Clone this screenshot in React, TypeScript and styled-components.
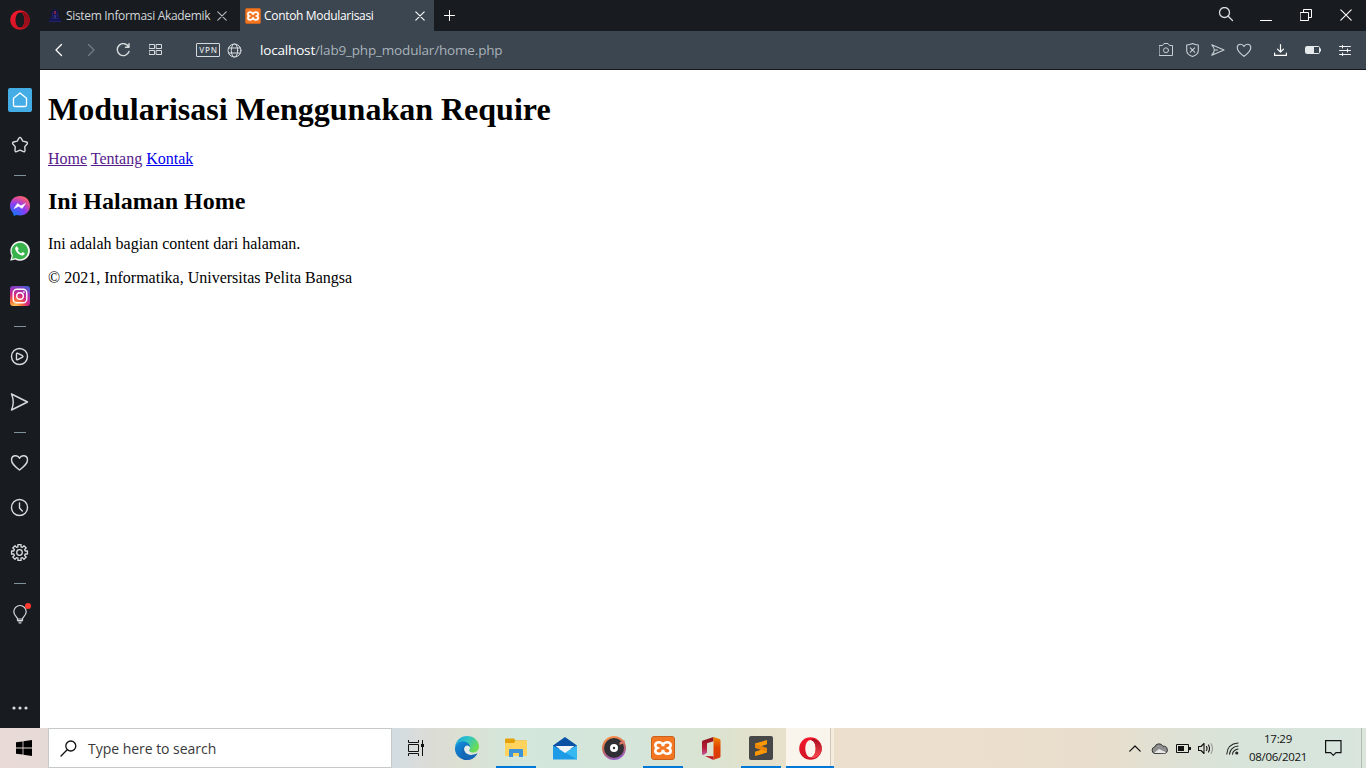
import React from "react";
import styled, { createGlobalStyle } from "styled-components";

const GlobalStyle = createGlobalStyle`
  * { box-sizing: border-box; }
  html, body { margin: 0; padding: 0; overflow: hidden; background: #fff; }
  svg { display: block; flex: none; }
`;

const ui = `"Segoe UI", "Open Sans", "Noto Sans", sans-serif`;

const Desktop = styled.div`
  width: 1366px;
  height: 768px;
  display: flex;
  flex-direction: column;
  font-family: ${ui};
`;

const Browser = styled.div`
  height: 728px;
  display: flex;
`;

/* ---------- sidebar ---------- */

const Sidebar = styled.aside`
  width: 40px;
  height: 728px;
  background: #181c20;
  display: flex;
  flex-direction: column;
  align-items: center;
`;

const SideLogo = styled.div`
  height: 77.5px;
  padding-top: 10px;
`;

const SideItem = styled.div`
  position: relative;
  height: 45px;
  width: 40px;
  display: flex;
  align-items: center;
  justify-content: center;
`;

const HomeTile = styled.div`
  width: 24px;
  height: 24px;
  border-radius: 2px;
  background: #44ade6;
  display: flex;
  align-items: center;
  justify-content: center;
`;

const SideRule = styled.div`
  width: 12px;
  height: 1px;
  margin: 7.5px 0;
  background: #7f909e;
`;

const AlertDot = styled.span`
  position: absolute;
  left: 25px;
  top: 11px;
  width: 6px;
  height: 6px;
  border-radius: 50%;
  background: #ff3b30;
`;

const SideMore = styled.div`
  margin-top: auto;
  height: 40px;
  display: flex;
  align-items: center;
`;

/* ---------- window ---------- */

const Main = styled.div`
  flex: 1;
  display: flex;
  flex-direction: column;
`;

const TabBar = styled.div`
  height: 31px;
  background: #181c20;
  display: flex;
`;

const Tab = styled.div<{ $active?: boolean; $width: number }>`
  width: ${(p) => p.$width}px;
  height: 31px;
  padding: 0 ${(p) => (p.$active ? 9 : 8)}px 0 ${(p) => (p.$active ? 5 : 8)}px;
  display: flex;
  align-items: center;
  background: ${(p) => (p.$active ? "#3b4650" : "transparent")};
  color: ${(p) => (p.$active ? "#fff" : "#d3d6d8")};
`;

const TabTitle = styled.span<{ $indent: number }>`
  flex: 1;
  margin-left: ${(p) => p.$indent}px;
  font-size: 12px;
  line-height: 16px;
  letter-spacing: -0.32px;
  white-space: nowrap;
`;

const NewTab = styled.div`
  width: 31px;
  height: 30px;
  display: flex;
  align-items: center;
  justify-content: center;
`;

const WindowButtons = styled.div`
  margin-left: auto;
  display: flex;
  height: 30px;
`;

const WindowButton = styled.div`
  width: 40px;
  height: 30px;
  display: flex;
  align-items: center;
  justify-content: center;
`;

const Toolbar = styled.div`
  height: 39px;
  padding-left: 10px;
  background: #3b4650;
  border-bottom: 1px solid #14181c;
  display: flex;
  align-items: center;
`;

const NavIcon = styled.div<{ $width: number }>`
  width: ${(p) => p.$width}px;
  display: flex;
  justify-content: center;
`;

const Vpn = styled.div`
  width: 24px;
  height: 14px;
  margin: 0 7px 0 18px;
  border: 1px solid #d5dade;
  border-radius: 1px;
  color: #d5dade;
  font-size: 8px;
  font-weight: 600;
  line-height: 12px;
  letter-spacing: 0.7px;
  text-indent: 1px;
  text-align: center;
`;

const Address = styled.div`
  flex: 1;
  margin-left: 18px;
  font-size: 13.5px;
  line-height: 20px;
  letter-spacing: -0.17px;
  color: #a9b2ba;
  white-space: nowrap;
`;

const Host = styled.span`
  color: #fff;
`;

const ToolbarActions = styled.div`
  display: flex;
  align-items: center;
`;

/* ---------- page ---------- */

const Page = styled.main`
  flex: 1;
  padding: 0 8px;
  background: #fff;
  color: #000;
  font-family: "Liberation Serif", "Times New Roman", serif;
  font-size: 16px;
  display: flow-root;
`;

const Title = styled.h1`
  margin: 21.44px 0;
  font-size: 32px;
  line-height: 37px;
`;

const Menu = styled.nav`
  line-height: 18px;
`;

const MenuLink = styled.a<{ $visited?: boolean }>`
  color: ${(p) => (p.$visited ? "#551a8b" : "#0000ee")};
  text-decoration: underline;
`;

const Heading = styled.h2`
  margin: 19.92px 0;
  font-size: 24px;
  line-height: 27px;
`;

const Paragraph = styled.p`
  margin: 16px 0;
  line-height: 18px;
`;

/* ---------- taskbar ---------- */

const Taskbar = styled.footer`
  height: 40px;
  display: flex;
  background: linear-gradient(
    90deg,
    #e9dad8 0px,
    #e6dad7 48px,
    #d2dde2 392px,
    #dcdcd6 430px,
    #dcdfd2 460px,
    #d3e7dc 515px,
    #d5e5d9 640px,
    #dae3d1 715px,
    #e6e0ca 770px,
    #ecdfcd 850px,
    #eadecd 1050px,
    #e8decd 1110px,
    #dfe1d4 1170px,
    #d8e4da 1240px,
    #d7e5dc 1340px,
    #dbe5dc 1366px
  );
`;

const StartButton = styled.div`
  width: 48px;
  display: flex;
  align-items: center;
  justify-content: center;
`;

const SearchBox = styled.div`
  width: 344px;
  height: 40px;
  padding-left: 11px;
  border: 1px solid #c5c9c9;
  background: #fff;
  display: flex;
  align-items: center;
`;

const SearchText = styled.span`
  margin-left: 11px;
  padding-top: 1px;
  color: #3a3a3a;
  font-size: 14px;
  line-height: 20px;
  letter-spacing: -0.03px;
`;

const TaskView = styled.div`
  width: 50px;
  padding-right: 2px;
  display: flex;
  align-items: center;
  justify-content: center;
`;

const AppButton = styled.div<{ $open?: boolean }>`
  width: 40px;
  height: 40px;
  margin: 0 4.5px;
  display: flex;
  align-items: center;
  justify-content: center;
  border-bottom: ${(p) => (p.$open ? "2px solid #0078d7" : "0")};
  padding-top: ${(p) => (p.$open ? "2px" : "0")};
`;

const ActiveApp = styled.div`
  width: 48px;
  height: 40px;
  margin-left: 1px;
  display: flex;
  align-items: center;
  justify-content: center;
  background: linear-gradient(90deg, #f9f5ec 44px, #cfc8ba 44px, #cfc8ba 45px, #f5ecde 45px);
  border-bottom: 2px solid #0078d7;
  padding-top: 2px;
`;

const Tray = styled.div`
  margin-left: auto;
  display: flex;
  align-items: center;
`;

const TrayIcon = styled.div<{ $width: number; $gap?: number }>`
  width: ${(p) => p.$width}px;
  margin-right: ${(p) => p.$gap ?? 0}px;
  display: flex;
  justify-content: center;
`;

const Clock = styled.div`
  width: 70px;
  text-align: center;
  font-size: 11.5px;
  line-height: 18px;
  color: #111;
  letter-spacing: -0.3px;
`;

const ShowDesktop = styled.div`
  width: 5px;
  height: 40px;
  border-left: 1px solid #b3bbb5;
`;

/* ---------- drawings ---------- */

type Draw = { size?: number; w?: number; h?: number; box?: string; color?: string; sw?: number; children: React.ReactNode };
const Line = ({ size = 20, w, h, box, color = "#d8dcdf", sw = 1.4, children }: Draw) => (
  <svg width={w ?? size} height={h ?? size} viewBox={box ?? `0 0 ${w ?? size} ${h ?? size}`} fill="none" stroke={color} strokeWidth={sw} strokeLinecap="round" strokeLinejoin="round">
    {children}
  </svg>
);

const OperaLogo = ({ size, id, shade }: { size: number; id: string; shade: [string, string] }) => (
  <svg width={size} height={size} viewBox="0 0 24 24">
    <defs>
      <linearGradient id={id} x1="0" y1="0" x2="0" y2="1">
        <stop offset="0" stopColor="#f5182c" />
        <stop offset="1" stopColor="#d01425" />
      </linearGradient>
      <linearGradient id={`${id}Edge`} x1="0" y1="0" x2="0" y2="1">
        <stop offset="0" stopColor={shade[0]} />
        <stop offset="1" stopColor={shade[1]} />
      </linearGradient>
    </defs>
    <path fillRule="evenodd" fill={`url(#${id})`} d="M12 .2a11.800 11.800 0 1 0 0 23.600 11.800 11.800 0 1 0 0-23.600zM12 3c3.300 0 5.400 4 5.400 9s-2.100 9-5.400 9-5.400-4-5.400-9 2.100-9 5.400-9z" />
    <path fill={`url(#${id}Edge)`} d="M12 3c1-.8 2.500-1 4-.8 4.500 1.500 7.800 5 7.800 9.800s-3.300 8.300-7.800 9.800c-1.500.2-3 0-4-.8 3.300 0 5.400-4 5.400-9S15.300 3 12 3z" />
  </svg>
);

const Xampp = ({ size }: { size: number }) => (
  <svg width={size} height={size} viewBox="0 0 24 24">
    <rect x=".5" y=".5" width="23" height="23" rx="2.500" fill="#f37623" stroke="#c9601b" />
    <path
      d="M7.900 6.200C5.500 6.200 4.300 7.600 4.300 9.200c0 1.300.7 2.200 2 2.800-1.300.6-2 1.500-2 2.800 0 1.600 1.200 3 3.600 3 2 0 2.600-1.500 4.100-1.500s2.100 1.500 4.100 1.500c2.400 0 3.600-1.400 3.600-3 0-1.300-.7-2.200-2-2.800 1.300-.6 2-1.500 2-2.800 0-1.600-1.200-3-3.600-3-2 0-2.600 1.500-4.100 1.500S9.900 6.200 7.900 6.200z"
      fill="none" stroke="#fff" strokeWidth="2.600"
    />
    <path d="M12 7.700v2.500M12 13.800v2.500" fill="none" stroke="#fff" strokeWidth="3" />
  </svg>
);

const CampusBadge = () => (
  <svg width="14" height="16" viewBox="0 0 14 16">
    <path d="M7 1l3.500 2.500v5L13 11v3H1v-3l2.500-2.500v-5z" fill="#15154f" />
    <path d="M1 13.500h12M3.500 10.500h7M4.500 5v4M9.500 5v4" stroke="#22226f" />
    <path d="M7 3v3" stroke="#a32a3c" strokeWidth="1.500" />
    <path d="M7 7v3" stroke="#5757a6" />
  </svg>
);

const Cross = ({ size, color = "#d8dcdf" }: { size: number; color?: string }) => (
  <Line size={size} color={color} sw={1.1}><path d={`M.8.8l${size - 1.6} ${size - 1.6}M${size - 0.8}.8L.8 ${size - 0.8}`} /></Line>
);

const Messenger = () => (
  <svg width="20" height="20" viewBox="0 0 20 20">
    <defs>
      <radialGradient id="msg" cx=".2" cy="1" r="1.100">
        <stop offset="0" stopColor="#0a7cff" />
        <stop offset=".55" stopColor="#8a3cf5" />
        <stop offset=".8" stopColor="#d94a9d" />
        <stop offset="1" stopColor="#ff6a68" />
      </radialGradient>
    </defs>
    <path d="M10 0C4.300 0 0 4.200 0 9.800c0 2.900 1.200 5.400 3.100 7.100.3.300.2 2.500.7 2.900.6.300 2.200-.8 2.700-.7 1.100.3 2.200.5 3.500.5 5.700 0 10-4.200 10-9.800S15.700 0 10 0z" fill="url(#msg)" />
    <path d="M4 12.600l3.500-5.200 3.300 2.300 4.800-2.300-3.500 5.100-3.300-2.200z" fill="#fff" stroke="#fff" strokeWidth=".5" strokeLinejoin="round" />
  </svg>
);

const WhatsApp = () => (
  <svg width="20" height="20" viewBox="0 0 20 20">
    <path d="M.2 19.800l1.400-5.100A9.800 9.800 0 1 1 5.300 18.400z" fill="#f2f5f2" />
    <path d="M2 18l1-3.500A8.200 8.200 0 1 1 5.600 17z" fill="#38b24a" />
    <path d="M6.900 5.200c-.5-.1-1.900.8-1.700 2.500.4 3 4 6.500 7 6.800 1.400 0 2.400-.9 2.500-2.200l-2.300-1.200-1.200 1.300c-1.600-.6-2.700-1.700-3.400-3.200L8.700 8z" fill="#fff" />
  </svg>
);

const Instagram = () => (
  <svg width="20" height="20" viewBox="0 0 20 20">
    <defs>
      <radialGradient id="ig" cx=".25" cy="1.050" r="1.150">
        <stop offset="0" stopColor="#ffd65a" />
        <stop offset=".3" stopColor="#f9703a" />
        <stop offset=".55" stopColor="#d6277f" />
        <stop offset=".8" stopColor="#a033b8" />
        <stop offset="1" stopColor="#4c5bd0" />
      </radialGradient>
    </defs>
    <rect width="20" height="20" rx="3" fill="url(#ig)" />
    <g fill="none" stroke="#fff" strokeWidth="1.400">
      <rect x="3.200" y="3.200" width="13.600" height="13.600" rx="3.800" />
      <circle cx="10" cy="10" r="3.300" />
    </g>
    <circle cx="13.900" cy="6.100" r=".9" fill="#fff" />
  </svg>
);

const gear = (() => {
  const pts: string[] = [];
  for (let i = 0; i < 8; i++) {
    const a = (i * Math.PI) / 4 - Math.PI / 2;
    [[-0.26, 5.9], [-0.2, 8.1], [0.2, 8.1], [0.26, 5.9]].forEach(([d, r]) =>
      pts.push(`${(9.5 + r * Math.cos(a + d)).toFixed(2)} ${(9.5 + r * Math.sin(a + d)).toFixed(2)}`)
    );
  }
  return `M${pts.join("L")}z`;
})();

const Heart = () => <path d="M9.500 17C5 13.500 1.500 10.800 1.500 7c0-2.600 1.700-4.300 4-4.300 1.800 0 3.200 1 4 2.600.8-1.600 2.200-2.600 4-2.600 2.300 0 4 1.700 4 4.300 0 3.800-3.500 6.500-8 10z" />;

const Edge = () => (
  <svg width="24" height="24" viewBox="0 0 24 24">
    <defs>
      <linearGradient id="edgeTop" x1="0" y1="0" x2="1" y2=".5">
        <stop offset="0" stopColor="#1ba3dd" /><stop offset=".5" stopColor="#2fc3c8" /><stop offset="1" stopColor="#6bdd55" />
      </linearGradient>
      <linearGradient id="edgeLow" x1="0" y1="0" x2="1" y2="1">
        <stop offset="0" stopColor="#1390dd" /><stop offset="1" stopColor="#0d4fa0" />
      </linearGradient>
    </defs>
    <path d="M0 11C.8 4.300 5.800 0 12 0c7 0 12 5 12 10.500 0 3.700-2.700 6-6 6-2.700 0-4.300-1.300-4-2.300.5-.8 1-1.500 1-2.500C15 8.500 11.500 6 8 6c-3.500 0-6.500 2-8 5z" fill="url(#edgeTop)" />
    <path d="M0 12c.6-4 4-6.500 8-6.500 4.200 0 7.300 2.700 7 6C14 10 12.500 9.500 11 10c-3.500 1.300-2.500 8.500 4.500 9 3 .3 5.300-.7 6.800-1.700C20.300 21.500 16.500 24 12 24 5 24-.5 18.500 0 12z" fill="url(#edgeLow)" />
    <path d="M11 10c-5 1.500-5.500 8.500-1.500 12 1 .9 2.800 1.500 4.500 1.800 3.700-.6 6.700-3 8.300-6.500-1.500 1-3.800 2-6.800 1.700-7-.5-8-7.700-4.500-9z" fill="#1468b8" />
    <path d="M11 10c1.500-.5 3 0 4 1.500.1 1.200-.5 1.900-1 2.700-.2.900.6 1.800 2 2.200.3.800-.5 1.500-2 2-3.500-1-6.500-6.500-3-8.400z" fill="#e4ecec" />
  </svg>
);

const Explorer = () => (
  <svg width="22" height="20" viewBox="0 0 22 20">
    <path d="M0 1.500Q0 .500 1 .500h8l1.500 2H21q1 0 1 1V10H0z" fill="#e3a209" />
    <path d="M0 5h9l1.500-2.500H21q1 0 1 1V18H0z" fill="#ffd35e" />
    <path d="M4 19v-7q0-1 1-1h12q1 0 1 1v7h-4v-4H8v4z" fill="#3d93d8" />
  </svg>
);

const Mail = () => (
  <svg width="24" height="23" viewBox="0 0 24 23">
    <path d="M12 0l12 8.500V12H0V8.500z" fill="#0a51a3" />
    <path d="M0 8.500L12 15.500 24 8.500V22.500H0z" fill="#1d9be6" />
    <path d="M0 8.500L24 22.500V8.500L12 15.500z" fill="#36b8f2" />
    <path d="M2.500 9h19l-9.500 7z" fill="#f2f5f8" />
  </svg>
);

const Groove = () => (
  <svg width="24" height="24" viewBox="0 0 24 24">
    <defs>
      <linearGradient id="groove" x1=".3" y1="0" x2=".6" y2="1">
        <stop offset="0" stopColor="#ff9447" /><stop offset=".5" stopColor="#c8685f" /><stop offset="1" stopColor="#9460d0" />
      </linearGradient>
    </defs>
    <circle cx="12" cy="12" r="12" fill="url(#groove)" />
    <circle cx="12" cy="12" r="10" fill="#302f36" />
    <path d="M17.500 6.500l5-2.500v3l-5 2z" fill="#dd7769" />
    <circle cx="12" cy="12" r="4" fill="#fff" />
    <circle cx="12" cy="12" r="1.200" fill="#302f36" />
  </svg>
);

const Office = () => (
  <svg width="19" height="23" viewBox="0 0 19 23">
    <defs>
      <linearGradient id="officeSide" x1="0" y1="0" x2="0" y2="1">
        <stop offset="0" stopColor="#8d1018" /><stop offset=".6" stopColor="#b51c38" /><stop offset="1" stopColor="#c75a9a" />
      </linearGradient>
      <linearGradient id="officeFace" x1="0" y1="0" x2="0" y2="1">
        <stop offset="0" stopColor="#f28a00" /><stop offset=".45" stopColor="#e04300" /><stop offset="1" stopColor="#d93a10" />
      </linearGradient>
    </defs>
    <path d="M0 5Q0 4 1 3.600L11.500 0v4.200L5 6.300v9.500L1.500 18Q0 18 0 16.500z" fill="url(#officeSide)" />
    <path d="M11.500 0l6 2q1 .4 1 1.400v16q0 1-1 1.400l-6 2z" fill="url(#officeFace)" />
    <path d="M3 19l8.500.3V23z" fill="#c01a2c" />
  </svg>
);

const Sublime = () => (
  <svg width="24" height="24" viewBox="0 0 24 24">
    <rect width="24" height="24" rx="2" fill="#474747" />
    <path d="M18 4v4.300l-6 2 6 2v4.300L6 20v-4.200l6-2-6-2V7.500z" fill="#ff9800" />
    <path d="M6 7.800l12 4.200v3.500L6 11.800z" fill="#ea850c" />
  </svg>
);

export default function App() {
  return (
    <Desktop>
      <GlobalStyle />
      <Browser>
        <Sidebar>
          <SideLogo><OperaLogo size={20} id="operaSide" shade={["#8c0d18", "#a30f1c"]} /></SideLogo>
          <SideItem>
            <HomeTile>
              <Line size={16} color="#fff" sw={1.3}><path d="M1.500 6.300L8 1l6.500 5.300V13q0 1.500-1.500 1.500H3Q1.500 14.500 1.500 13z" /></Line>
            </HomeTile>
          </SideItem>
          <SideItem>
            <Line><path d="M8.900 3.200q1.100-1.600 2.200 0l1.700 2.900 3.700.9q1.500.7.600 2l-2.300 2.600.2 4.100q-.2 1.400-1.500 1L10 15.200l-3.500 1.500q-1.300.4-1.500-1l.2-4.100L2.900 9q-.9-1.300.6-2l3.700-.9z" /></Line>
          </SideItem>
          <SideRule />
          <SideItem><Messenger /></SideItem>
          <SideItem><WhatsApp /></SideItem>
          <SideItem><Instagram /></SideItem>
          <SideRule />
          <SideItem>
            <Line><circle cx="9.500" cy="9.500" r="8" /><path d="M6.500 6.800q0-.8.800-.6L12.500 8.700q1 .8 0 1.500l-5.200 2.600q-.8.200-.8-.6z" /></Line>
          </SideItem>
          <SideItem><Line><path d="M1.500 2l16 8-16 8q3.500-8 0-16z" /></Line></SideItem>
          <SideRule />
          <SideItem><Line><Heart /></Line></SideItem>
          <SideItem><Line><circle cx="9.500" cy="9.500" r="8" /><path d="M9.500 5v5l2.800 3" /></Line></SideItem>
          <SideItem><Line sw={1.3}><path d={gear} /><circle cx="9.500" cy="9.500" r="2.800" /></Line></SideItem>
          <SideRule />
          <SideItem>
            <Line sw={1.2}>
              <path d="M7.500 15c0-2-3.700-3.300-3.700-7.300a6.200 6.200 0 0 1 12.400 0c0 4-3.700 5.300-3.700 7.300zM7.500 15v1.500h5V15M8 17h4M9 18.800h2" />
            </Line>
            <AlertDot />
          </SideItem>
          <SideMore>
            <svg width="16" height="4" viewBox="0 0 16 4" fill="#d8dcdf"><circle cx="2" cy="2" r="1.600" /><circle cx="8" cy="2" r="1.600" /><circle cx="14" cy="2" r="1.600" /></svg>
          </SideMore>
        </Sidebar>

        <Main>
          <TabBar>
            <Tab $width={200}>
              <CampusBadge />
              <TabTitle $indent={4}>Sistem Informasi Akademik</TabTitle>
              <NavIcon $width={20}><Cross size={10} color="#b9bdc0" /></NavIcon>
            </Tab>
            <Tab $active $width={194}>
              <Xampp size={16} />
              <TabTitle $indent={3}>Contoh Modularisasi</TabTitle>
              <Cross size={10} color="#fff" />
            </Tab>
            <NewTab><Line size={11} color="#fff" sw={1}><path d="M5.500.5v10M.5 5.500h10" /></Line></NewTab>
            <WindowButtons>
              <WindowButton><Line size={16} sw={1.3}><circle cx="6.500" cy="5.500" r="5" /><path d="M10.200 9.200l4.300 4.300" /></Line></WindowButton>
              <WindowButton><Line w={12} h={12} sw={1} color="#fff"><path d="M.5 11.500h11" /></Line></WindowButton>
              <WindowButton><Line w={12} h={12} sw={1} color="#fff"><path d="M.5 3.500h8v8h-8zM3.500 3.500v-3h8v8h-3" /></Line></WindowButton>
              <WindowButton><Cross size={12} color="#fff" /></WindowButton>
            </WindowButtons>
          </TabBar>

          <Toolbar>
            <NavIcon $width={18}><Line w={8} h={14} color="#fff" sw={1.300}><path d="M6.500 1.500L1 7l5.500 5.500" /></Line></NavIcon>
            <NavIcon $width={46}><Line w={8} h={14} color="#6f7a84"><path d="M1.500 1.500L7 7l-5.500 5.500" /></Line></NavIcon>
            <NavIcon $width={18}><Line size={14} sw={1.400}><path d="M12.700 4A6 6 0 1 0 13 8.500M13 .8V4.300H9.500" /></Line></NavIcon>
            <NavIcon $width={46}>
              <Line w={13} h={12} sw={1}><path d="M.5.5h5v4h-5zM7.500.5h5v4h-5zM.5 6.500h5v4h-5zM7.500 6.500h5v4h-5z" /></Line>
            </NavIcon>
            <Vpn>VPN</Vpn>
            <Line size={15} sw={1}><circle cx="7.500" cy="7.500" r="6.500" /><ellipse cx="7.500" cy="7.500" rx="3.200" ry="6.500" /><path d="M1.500 5h12M1.500 10h12" /></Line>
            <Address><Host>localhost</Host>/lab9_php_modular/home.php</Address>
            <ToolbarActions>
              <NavIcon $width={24}>
                <Line w={14} h={14} sw={1} color="#c8cfd4"><path d="M.5 2.500h3l1.500-2h4l1.500 2h3v10H.5z" /><circle cx="7" cy="7.300" r="2.500" /></Line>
              </NavIcon>
              <NavIcon $width={28}>
                <Line w={13} h={14} sw={1.1} color="#c8cfd4"><path d="M6.500.6Q9 2 12.300 2v5.500q0 4-5.800 6-5.800-2-5.800-6V2Q4 2 6.500.6zM4.300 4.800l4.400 4.400M8.700 4.800L4.300 9.200" /></Line>
              </NavIcon>
              <NavIcon $width={24}><Line w={14} h={12} sw={1.100} color="#c8cfd4"><path d="M.8.800L13 6 .8 11.200Q3.300 8.500 3.300 6T.8.800zM3.500 6h3" /></Line></NavIcon>
              <NavIcon $width={28}><Line size={16} box="0 0 19 19" sw={1.400} color="#c8cfd4"><Heart /></Line></NavIcon>
              <NavIcon $width={44}><Line w={13} h={12} sw={1.200} color="#fff"><path d="M6.500 .6v7.400M3.500 5.200l3 3 3-3M.6 9v2.400h11.800V9" /></Line></NavIcon>
              <NavIcon $width={22}>
                <svg width="16" height="8" viewBox="0 0 16 8"><rect x=".5" y=".5" width="14" height="7" rx="1" fill="none" stroke="#e6eaed" /><path d="M1 1h8v6H1zM15 2.500h1v3h-1z" fill="#e6eaed" /></svg>
              </NavIcon>
              <NavIcon $width={42}>
                <Line w={12} h={11} sw={1} color="#f0f2f4"><path d="M.5 1.500h11M.5 5.500h11M.5 9.500h11M3.500 0v3M8.500 4v3M3.500 8v3" /></Line>
              </NavIcon>
            </ToolbarActions>
          </Toolbar>

          <Page>
            <Title>Modularisasi Menggunakan Require</Title>
            <Menu>
              <MenuLink $visited>Home</MenuLink> <MenuLink $visited>Tentang</MenuLink> <MenuLink>Kontak</MenuLink>
            </Menu>
            <Heading>Ini Halaman Home</Heading>
            <Paragraph>Ini adalah bagian content dari halaman.</Paragraph>
            <Paragraph>© 2021, Informatika, Universitas Pelita Bangsa</Paragraph>
          </Page>
        </Main>
      </Browser>

      <Taskbar>
        <StartButton>
          <svg width="16" height="16" viewBox="0 0 16 16" fill="#000"><path d="M0 2.300L6.600 1.400v6.100H0zM7.400 1.300L16 0v7.500H7.400zM0 8.400h6.600v6.200L0 13.700zM7.400 8.400H16V16l-8.600-1.300z" /></svg>
        </StartButton>
        <SearchBox>
          <Line size={17} color="#111" sw={1.3}><circle cx="10.800" cy="6" r="5" /><path d="M7.200 9.700L1 16" /></Line>
          <SearchText>Type here to search</SearchText>
        </SearchBox>
        <TaskView>
          <svg width="16" height="16" viewBox="0 0 16 16" fill="none" stroke="#111"><path d="M.5 0v2.500h10V0M.5 16v-2.500h10V16M.5 4.500h10v7H.5zM14.500 0v16" /><path d="M13 4h3v3h-3z" fill="#111" stroke="none" /></svg>
        </TaskView>
        <AppButton><Edge /></AppButton>
        <AppButton $open><Explorer /></AppButton>
        <AppButton><Mail /></AppButton>
        <AppButton><Groove /></AppButton>
        <AppButton $open><Xampp size={24} /></AppButton>
        <AppButton><Office /></AppButton>
        <AppButton $open><Sublime /></AppButton>
        <ActiveApp><OperaLogo size={23} id="operaTask" shade={["#a80d1e", "#ff4b50"]} /></ActiveApp>
        <Tray>
          <TrayIcon $width={16}><Line w={12} h={7} color="#111" sw={1.2}><path d="M.8 6.200L6 1l5.200 5.200" /></Line></TrayIcon>
          <TrayIcon $width={32}>
            <svg width="17" height="11" viewBox="0 0 17 11"><path d="M4 10.500a3.300 3.300 0 0 1-.3-6.500A4.500 4.500 0 0 1 12 3.300a3.600 3.600 0 0 1 1.300 7.200z" fill="#8f8f8f" stroke="#333" /><path d="M3 10l5-4 7 3.300-1.500.9z" fill="#e8e8e8" /></svg>
          </TrayIcon>
          <TrayIcon $width={16}>
            <svg width="15" height="9" viewBox="0 0 15 9"><path d="M.5.5h12v8H.5z" fill="none" stroke="#111" /><path d="M2 2h6v5H2zM13 3h2v3h-2z" fill="#111" /></svg>
          </TrayIcon>
          <TrayIcon $width={30}>
            <Line w={16} h={13} color="#111" sw={1.1}><path d="M.5 4.500H3L6 1.500v10L3 8.500H.5zM8.500 4.500q1 2 0 4M10.500 3q2 3.500 0 7" /><path d="M13 1.500q3 5 0 10" stroke="#999" /></Line>
          </TrayIcon>
          <TrayIcon $width={22}>
            <Line w={13} h={13} color="#222" sw={1.1}><path d="M.8 12Q1.500 2 12 1M3.500 12.200Q4.500 5 12 4M6.500 12.200Q7 8 12 7" /><circle cx="10.800" cy="11" r="1" fill="#222" /></Line>
          </TrayIcon>
          <Clock>17:29<br />08/06/2021</Clock>
          <TrayIcon $width={40} $gap={8}><Line w={17} h={16} color="#111" sw={1.2}><path d="M.6.600h15.400v12h-5l-2.700 2.700-2.700-2.700h-5z" strokeLinejoin="miter" /></Line></TrayIcon>
          <ShowDesktop />
        </Tray>
      </Taskbar>
    </Desktop>
  );
}
